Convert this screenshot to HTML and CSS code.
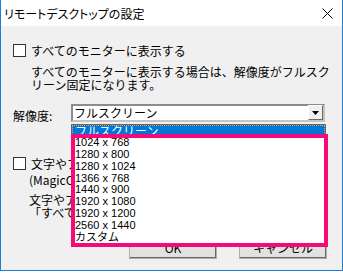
FILE: index.html
```html
<!DOCTYPE html>
<html lang="ja">
<head>
  <meta charset="UTF-8" />
  <title>リモートデスクトップの設定</title>
  <link rel="stylesheet" href="styles.css">
</head>
<body>
  <div class="window">
    <div class="titlebar">
      <span class="title">リモートデスクトップの設定</span>
      <svg class="close" width="11" height="11" viewBox="0 0 11 11">
        <path d="M0.5 0.5 L10.5 10.5 M10.5 0.5 L0.5 10.5" stroke="#000" stroke-width="1" fill="none" />
      </svg>
    </div>
    <div class="content">
      <label class="check"><span class="box"></span>すべてのモニターに表示する</label>
      <p class="note">すべてのモニターに表示する場合は、解像度がフルスク<br>リーン固定になります。</p>

      <div class="field">
        <span class="field-label">解像度:</span>
        <div class="combo">
          <div class="combo-value">フルスクリーン</div>
          <div class="combo-btn">
            <svg width="7" height="4" viewBox="0 0 7 4"><path d="M0 0 H7 L3.5 4 Z" fill="#000" /></svg>
          </div>
          <ul class="combo-list">
            <li class="selected">フルスクリーン</li>
            <li>1024 x 768</li>
            <li>1280 x 800</li>
            <li>1280 x 1024</li>
            <li>1366 x 768</li>
            <li>1440 x 900</li>
            <li>1920 x 1080</li>
            <li>1920 x 1200</li>
            <li>2560 x 1440</li>
            <li>カスタム</li>
          </ul>
          <div class="mark-box"></div>
        </div>
      </div>

      <!-- the rest of these lines sits under the open list -->
      <div class="hidden-part">
        <label class="check check-2"><span class="box"></span>文字やアイコン</label>
        <p class="note note-sub">(MagicConnect</p>
        <p class="note note-sub note-last">文字やアイコン<br>「すべての</p>
      </div>

      <div class="buttons">
        <button class="btn">OK</button>
        <button class="btn">キャンセル</button>
      </div>
    </div>
  </div>
</body>
</html>
```

FILE: styles.css
```css
* {
  margin: 0;
  padding: 0;
  box-sizing: border-box;
}
body {
  background: #fff;
  font-family: "Noto Sans CJK JP", sans-serif;
  font-size: 12px;
  line-height: 13px;
  color: #000;
}
.window {
  width: 343px;
  height: 271px;
  border: 1px solid #1c7ed6;
  border-top: none;
  background: #f0f0f0;
  display: flex;
  flex-direction: column;
}
.titlebar {
  height: 26px;
  background: #fff;
  display: flex;
  align-items: center;
  justify-content: space-between;
  padding: 0 9px 0 3px;
}
.title {
  font-size: 12px;
  font-feature-settings: "palt";
  color: #000;
}
.close {
  display: block;
  margin-top: 1px;
}
.content {
  flex: 1;
  padding: 0 15px 0 12px;
}
.check {
  display: flex;
  align-items: center;
  height: 13px;
  margin-top: 18px;
  white-space: nowrap;
}
.check .box {
  width: 13px;
  height: 13px;
  border: 1px solid #333;
  background: #fff;
  margin-right: 5px;
  flex-shrink: 0;
}
.note {
  margin-top: 8px;
  padding-left: 18px;
  white-space: nowrap;
}
.field {
  display: flex;
  align-items: center;
  margin-top: 13px;
}
.field-label {
  width: 58px;
  padding-top: 4px;
}
.combo {
  position: relative;
  width: 254px;
  height: 18px;
  background: #fff;
  border: 2px solid;
  border-color: #8c8c8c #c4c4c4 #c4c4c4 #8c8c8c;
}
.combo-value {
  padding-left: 1px;
  line-height: 14px;
}
.combo-btn {
  position: absolute;
  top: -1px;
  right: 0;
  width: 15px;
  height: 15px;
  background: #f0f0f0;
  border: 1px solid;
  border-color: #fff #696969 #696969 #fff;
  display: flex;
  align-items: center;
  justify-content: center;
}
.combo-btn svg {
  display: block;
}
.combo-list {
  position: absolute;
  left: -2px;
  top: 18px;
  width: 255px;
  list-style: none;
  background: #fff;
  border: 1px solid #646464;
  padding-bottom: 2px;
  font-family: "Liberation Sans", "Noto Sans CJK JP", sans-serif;
  font-size: 11px;
  line-height: 11.9px;
  z-index: 1;
}
.combo-list li {
  padding-left: 3px;
  height: 11.9px;
  white-space: nowrap;
}
.combo-list li.selected {
  background: #0078d7;
  color: #fff;
  outline: 1px dotted #f2a54a;
  outline-offset: -1px;
  font-family: "Noto Sans CJK JP", sans-serif;
  font-size: 12px;
}
.mark-box {
  position: absolute;
  left: -2px;
  top: 28px;
  width: 257px;
  height: 113px;
  border: 4px solid #f50a78;
  z-index: 2;
}
.hidden-part {
  width: 59px;
  overflow: hidden;
}
.check-2 {
  margin-top: 35px;
}
.note-sub {
  margin-top: 3px;
  padding-left: 16px;
}
.note-last {
  margin-top: 7px;
}
.buttons {
  display: flex;
  justify-content: flex-end;
  gap: 22px;
  margin-top: 17px;
}
.btn {
  width: 88px;
  height: 23px;
  background: #e1e1e1;
  border: 1px solid #adadad;
  box-shadow: inset -1px -1px #696969;
  font-family: "Noto Sans CJK JP", sans-serif;
  font-size: 12px;
  color: #000;
}
```
